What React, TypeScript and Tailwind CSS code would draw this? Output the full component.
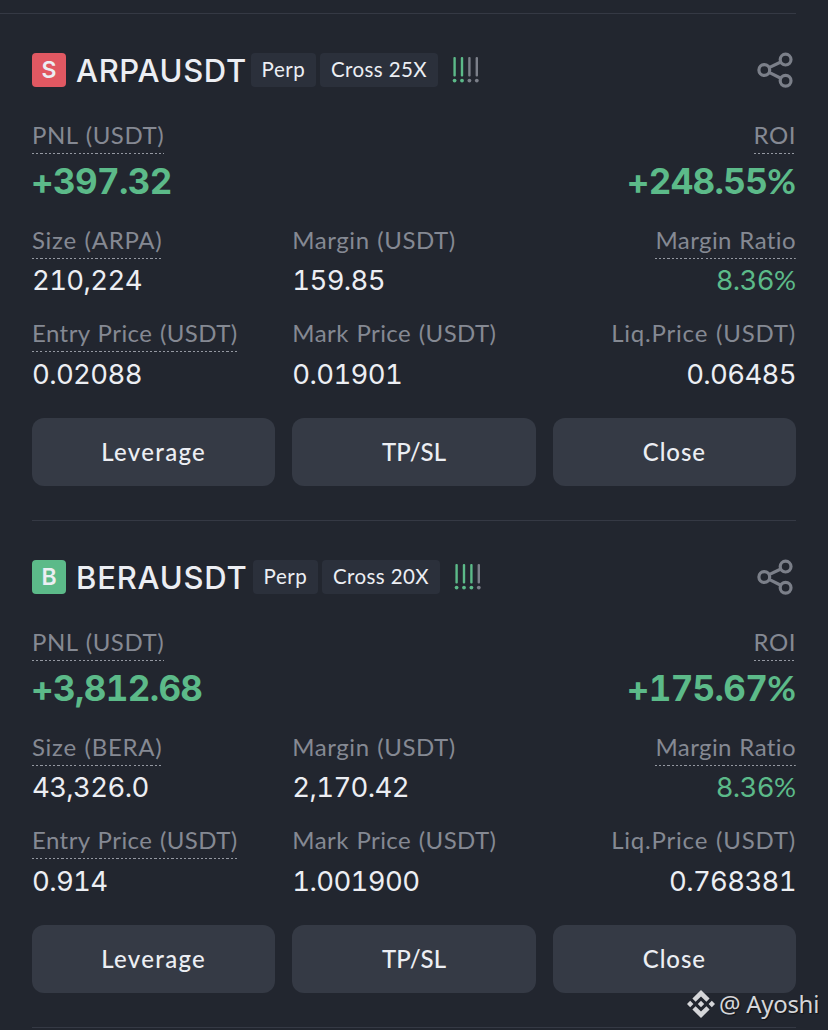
import { clsx } from "clsx";

type Position = {
  side: "S" | "B";
  symbol: string;
  symbolClass: string;
  coin: string;
  leverage: string;
  risk: string[];
  pnl: string;
  roi: string;
  size: string;
  margin: string;
  ratio: string;
  entry: string;
  mark: string;
  liq: string;
};

const GREEN = "#5cba89";
const GRAY = "#7b7f89";

const positions: Position[] = [
  {
    side: "S",
    symbol: "ARPAUSDT",
    symbolClass: "w-[175px] tracking-[0.65px]",
    coin: "ARPA",
    leverage: "25X",
    risk: [GREEN, GREEN, GRAY, GRAY],
    pnl: "+397.32",
    roi: "+248.55",
    size: "210,224",
    margin: "159.85",
    ratio: "8.36",
    entry: "0.02088",
    mark: "0.01901",
    liq: "0.06485",
  },
  {
    side: "B",
    symbol: "BERAUSDT",
    symbolClass: "w-[177px] tracking-[0.8px]",
    coin: "BERA",
    leverage: "20X",
    risk: [GREEN, GREEN, GREEN, GRAY],
    pnl: "+3,812.68",
    roi: "+175.67",
    size: "43,326.0",
    margin: "2,170.42",
    ratio: "8.36",
    entry: "0.914",
    mark: "1.001900",
    liq: "0.768381",
  },
];

const ShareIcon = () => (
  <svg width="38" height="38" viewBox="0 0 38 38" fill="none" stroke="#7b7f89" strokeWidth="3.2">
    <circle cx="8.3" cy="19" r="5.4" />
    <circle cx="29.6" cy="8.6" r="5.4" />
    <circle cx="29.6" cy="29.7" r="5.4" />
    <path d="M13.1 16.6 24.8 11M13.1 21.4 24.8 27.2" />
  </svg>
);

const RiskIcon = ({ colors }: { colors: string[] }) => (
  <svg width="28" height="28" viewBox="0 0 28 28">
    {colors.map((color, i) => (
      <g key={i} fill={color}>
        <rect x={1.4 + i * 7.4} y="1" width="2.4" height="19.6" rx="1" />
        <circle cx={2.6 + i * 7.4} cy="24.6" r="1.9" />
      </g>
    ))}
  </svg>
);

const Label = ({ text, dotted, className }: { text: string; dotted?: boolean; className?: string }) => (
  <div className="h-[34px] whitespace-nowrap">
    <span
      className={clsx(
        "inline-block h-[34px] font-[Lato,sans-serif] text-[24px] leading-[29px] [word-spacing:1px] text-[#858993]",
        dotted &&
          "bg-[repeating-linear-gradient(90deg,#9498a1_0_2.2px,transparent_2.2px_4.23px)] bg-[length:100%_1px] bg-bottom bg-no-repeat",
        className || "tracking-[0.55px]"
      )}
    >
      {text}
    </span>
  </div>
);

const Value = ({ text, percent, className }: { text: string; percent?: boolean; className?: string }) => (
  <div className={clsx("h-[43px] text-[27.5px] leading-[44px] tracking-[-0.65px] tabular-nums", className)}>
    {text}
    {percent && <span className="font-[Lato,sans-serif] tracking-normal">%</span>}
  </div>
);

const BigValue = ({ text, percent }: { text: string; percent?: boolean }) => (
  <div className="mt-[7px] -ml-[1px] h-[40px] text-[35px] leading-[40px] font-bold tracking-[-0.65px] text-[#5cba89] tabular-nums">
    {text}
    {percent && <span className="font-[Lato,sans-serif] leading-none tracking-normal">%</span>}
  </div>
);

const Button = ({ text, className }: { text: string; className?: string }) => (
  <button
    className={clsx(
      "h-[68px] rounded-[12px] bg-[#353a45] pb-[1px] font-[Lato,sans-serif] text-[24px] font-medium",
      className
    )}
  >
    {text}
  </button>
);

const PositionCard = ({ item }: { item: Position }) => (
  <div className="h-[507px] pt-[39px]">
    <div className="flex h-[34px] items-center">
      <div
        className={clsx(
          "flex h-[34px] w-[34px] items-center justify-center rounded-[4px] text-[23px] leading-[34px] font-semibold",
          item.side === "S" ? "bg-[#e15862]" : "bg-[#5cba89]"
        )}
      >
        {item.side}
      </div>
      <h2
        className={clsx(
          "ml-[10px] pt-[2px] text-[31px] leading-[34px] font-medium whitespace-nowrap",
          item.symbolClass
        )}
      >
        {item.symbol}
      </h2>
      <span className="flex h-[34px] w-[65px] items-center justify-center rounded-[4px] bg-[#2b303b] pb-[2px] font-[Lato,sans-serif] text-[20.5px] tracking-[0.6px]">
        Perp
      </span>
      <span className="mr-[13px] ml-[4px] flex h-[34px] w-[118px] items-center justify-center rounded-[4px] bg-[#2b303b] pb-[2px] font-[Lato,sans-serif] text-[20.5px] tracking-[0.4px]">
        Cross {item.leverage}
      </span>
      <div className="ml-[1px]">
        <RiskIcon colors={item.risk} />
      </div>
      <div className="mr-[2px] ml-auto">
        <ShareIcon />
      </div>
    </div>

    <div className="mt-[33px] flex justify-between">
      <div>
        <Label text="PNL (USDT)" dotted />
        <BigValue text={item.pnl} />
      </div>
      <div className="text-right">
        <Label text="ROI" dotted />
        <BigValue text={item.roi} percent />
      </div>
    </div>

    <div className="mt-[24px] grid grid-cols-3 gap-x-[17px] gap-y-[16px]">
      <div>
        <Label text={`Size (${item.coin})`} dotted className="tracking-[0.7px]" />
        <Value text={item.size} className="-mt-px mb-px" />
      </div>
      <div>
        <Label text="Margin (USDT)" />
        <Value text={item.margin} className="-mt-px mb-px" />
      </div>
      <div className="text-right">
        <Label text="Margin Ratio" dotted className="tracking-[0.4px]" />
        <Value text={item.ratio} percent className="-mt-px mb-px text-[#5cba89]" />
      </div>
      <div>
        <Label text="Entry Price (USDT)" dotted className="tracking-[0.43px]" />
        <Value text={item.entry} />
      </div>
      <div>
        <Label text="Mark Price (USDT)" className="tracking-[0.43px]" />
        <Value text={item.mark} />
      </div>
      <div className="text-right">
        <Label text="Liq.Price (USDT)" className="tracking-[0.8px]" />
        <Value text={item.liq} />
      </div>
    </div>

    <div className="mt-[23px] grid grid-cols-3 gap-x-[17px]">
      <Button text="Leverage" className="tracking-[1.3px]" />
      <Button text="TP/SL" />
      <Button text="Close" className="tracking-[0.9px]" />
    </div>
  </div>
);

const Watermark = () => (
  <div className="absolute top-[987px] left-[687px] flex items-center font-['Noto_Sans',sans-serif] text-[24px] leading-[34px] tracking-[-0.3px] whitespace-nowrap text-[#d5d6d9] [text-shadow:1px_1px_1px_#0008]">
    <svg width="28" height="28" viewBox="0 0 28 28" fill="currentColor">
      <path d="M14 0 22.6 8.6 19.4 11.8 14 6.4 8.6 11.8 5.4 8.6z" />
      <path d="M14 28 22.6 19.4 19.4 16.2 14 21.6 8.6 16.2 5.4 19.4z" />
      <path d="M14 10.8 17.2 14 14 17.2 10.8 14zM3.2 10.8 6.4 14 3.2 17.2 0 14zM24.8 10.8 28 14 24.8 17.2 21.6 14z" />
    </svg>
    <span className="ml-[4px]">@ Ayoshi</span>
  </div>
);

const App = () => {
  return (
    <div className="relative h-[1030px] w-[828px] overflow-hidden bg-[#22262f] pt-[13px] font-[Inter,sans-serif] text-[#eceef3]">
      <div className="h-px w-[796px] bg-[#353944]"></div>
      <div className="mr-[32px] ml-[32px]">
        {positions.map((item, i) => (
          <div key={item.symbol}>
            {i > 0 && <div className="-mt-px h-px bg-[#353944]"></div>}
            <PositionCard item={item} />
          </div>
        ))}
        <div className="-mt-px h-px bg-[#353944]"></div>
      </div>
      <Watermark />
    </div>
  );
};

export default App;
